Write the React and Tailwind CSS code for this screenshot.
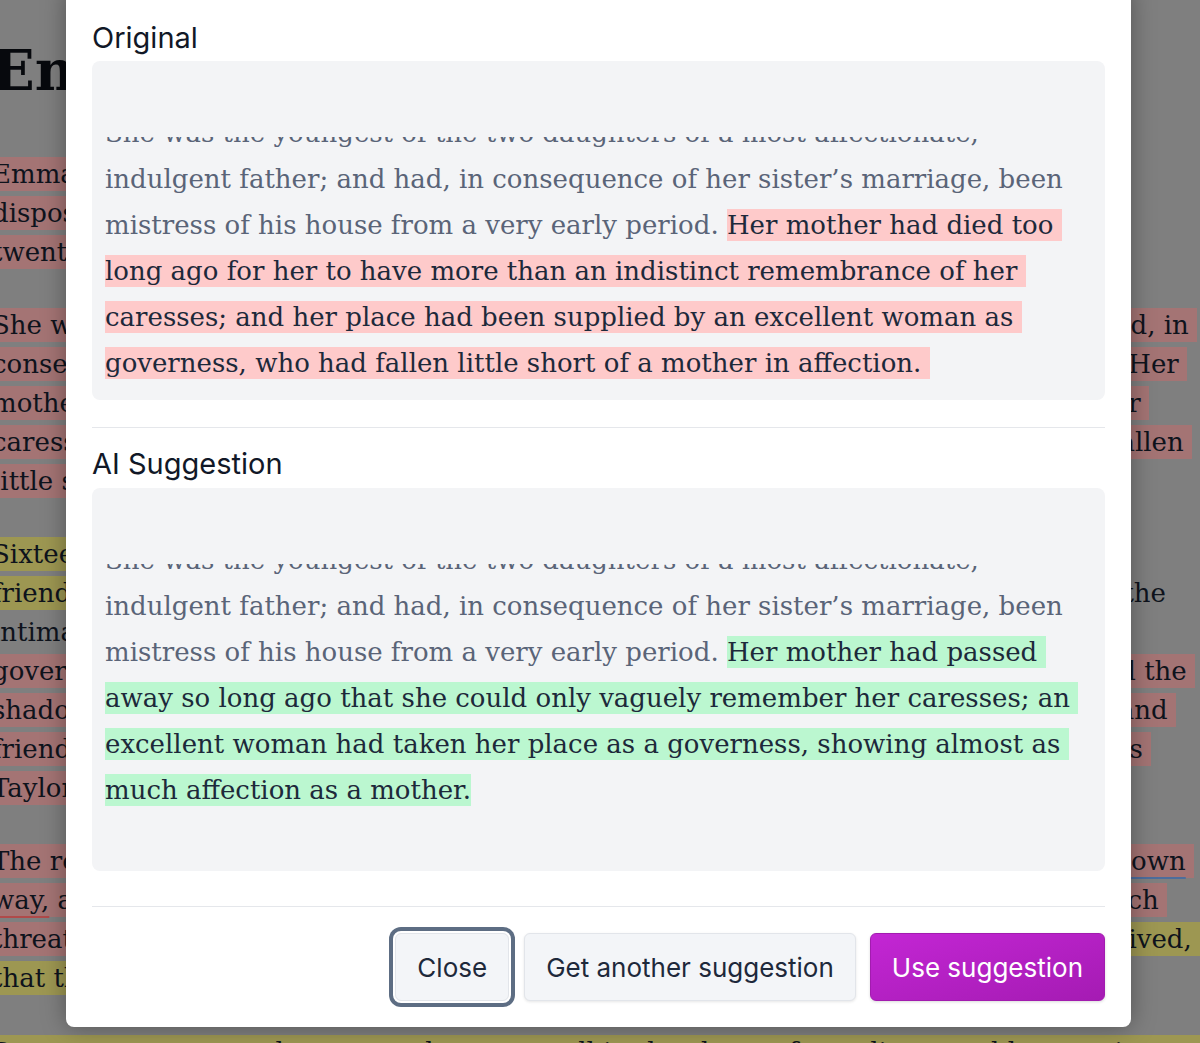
const serif = "font-['DejaVu_Serif',serif]";
const sans = "font-['Inter',sans-serif]";

const RED = 'bg-[#a47474]';
const YEL = 'bg-[#9d9752]';

// one line of the dimmed page behind the dialog: only its two ends show
function PageLine({ left, right, lbg = '', rbg = '', pr = 'pr-0' }) {
  return (
    <div className={`flex justify-between whitespace-pre ${pr}`}>
      <div>
        <span className={`${lbg} py-[2px]`}>{left}</span>
      </div>
      <div>
        <span className={`${rbg} py-[2px]`}>{right}</span>
      </div>
    </div>
  );
}

function Page() {
  return (
    <div className={`${serif} text-[#0e131c] ml-[-8px] pt-[30px]`}>
      <h1 className="text-[56px] leading-[80px] font-bold text-[#07090d]">Emma</h1>

      <div className="mt-[45px] text-[26px] leading-[39px]">
        <PageLine left="Emma Woodhouse, handsome, clever, and rich," lbg={RED} />
        <PageLine left="disposition, seemed to unite some of the best" lbg={RED} />
        <PageLine left="twenty-one years in the world with very little" lbg={RED} />
      </div>

      <div className="mt-[34px] text-[26px] leading-[39px]">
        <PageLine left="She was the youngest of the two" lbg={RED} right="father; and had, in " rbg={RED} pr="pr-[3px]" />
        <PageLine left="consequence of her sister’s marriage," lbg={RED} right="early period. Her " rbg={RED} pr="pr-[13px]" />
        <PageLine left="mother had died too long ago for her" lbg={RED} right="remembrance of her " rbg={RED} pr="pr-[51px]" />
        <PageLine left="caresses; and her place had been" lbg={RED} right="who had fallen " rbg={RED} pr="pr-[8px]" />
        <PageLine left="little short of a mother in affection." lbg={RED} />
      </div>

      <div className="mt-[34px] text-[26px] leading-[39px]">
        <PageLine left="Sixteen years had Miss Taylor been" lbg={YEL} />
        <PageLine left="friend, very fond of both daughters," lbg={YEL} right="it was more the" pr="pr-[34px]" />
        <PageLine left="intimacy of sisters. Even before" />
        <PageLine left="governess, the mildness of her temper" lbg={RED} right="restraint; and the " rbg={RED} pr="pr-[5px]" />
        <PageLine left="shadow of authority being now long" lbg={RED} right="friend and " rbg={RED} pr="pr-[24px]" />
        <PageLine left="friend very mutually attached, and" lbg={RED} right="esteeming Miss " rbg={RED} pr="pr-[49px]" />
        <PageLine left="Taylor’s judgment, but directed chiefly" lbg={RED} />
      </div>

      <div className="mt-[34px] text-[26px] leading-[39px]">
        <PageLine
          left="The real evils, indeed, of Emma’s"
          lbg={RED}
          right={<>too much her <span className="underline decoration-2 decoration-[#4d6d9c] underline-offset-[7px]">own</span> </>}
          rbg={RED}
          pr="pr-[6px]"
        />
        <PageLine
          left={<><span className="underline decoration-2 decoration-[#b04a4a] underline-offset-[7px]">way,</span> and a disposition to think</>}
          lbg={RED}
          right="disadvantages which "
          rbg={RED}
          pr="pr-[33px]"
        />
        <PageLine left="threatened alloy to her many enjoyments." lbg={RED} right="at present so unperceived, " rbg={YEL} />
        <PageLine left="that they did not by any means rank as" lbg={YEL} />
      </div>

      <div className="mt-[35px] text-[26px] leading-[39px] whitespace-pre">
        <span className={`${YEL} py-[2px]`}>Sorrow came—a gentle sorrow—but not at all in the shape of any disagreeable consciousness. </span>
      </div>
    </div>
  );
}

// text inside the dialog's boxes
function TextLine({ children }) {
  return <div className="whitespace-pre">{children}</div>;
}

function Mark({ tone, children }) {
  const bg = tone === 'red' ? 'bg-[#fecaca]' : 'bg-[#bbf7d0]';
  return <span className={`${bg} text-[#1d293a] py-[1px]`}>{children}</span>;
}

function Passage({ tone, box, clip, lines }) {
  return (
    <div className={`${box} rounded-lg bg-[#f3f4f6] pt-[76px] px-[13px]`}>
      <div className={`${clip} overflow-hidden`}>
        <div className={`mt-[-27px] ${serif} text-[26px] leading-[46px] text-[#5a6478]`}>
          <TextLine>She was the youngest of the two daughters of a most affectionate,</TextLine>
          <TextLine>indulgent father; and had, in consequence of her sister’s marriage, been</TextLine>
          <TextLine>
            mistress of his house from a very early period. <Mark tone={tone}>{lines[0]}</Mark>
          </TextLine>
          {lines.slice(1).map((l) => (
            <TextLine key={l}>
              <Mark tone={tone}>{l}</Mark>
            </TextLine>
          ))}
        </div>
      </div>
    </div>
  );
}

export default function App() {
  return (
    <div className="relative w-[1200px] h-[1043px] overflow-hidden bg-[#7f7f7f]">
      <Page />

      {/* dialog */}
      <div className={`${sans} absolute left-[66px] top-[-12px] w-[1065px] rounded-lg bg-white px-[26px] pt-[32px] pb-[26px] shadow-[0_0_24px_rgba(0,0,0,0.35)]`}>
        <h2 className="text-[29px] leading-[36px] text-[#111827] mb-[5px]">Original</h2>
        <Passage
          tone="red"
          box="h-[339px]"
          clip="h-[251px]"
          lines={[
            'Her mother had died too ',
            'long ago for her to have more than an indistinct remembrance of her ',
            'caresses; and her place had been supplied by an excellent woman as ',
            'governess, who had fallen little short of a mother in affection. ',
          ]}
        />

        <div className="mt-[27px] border-t border-[#e5e7eb]" />

        <h2 className="mt-[18px] text-[29px] leading-[36px] text-[#111827] mb-[6px]">AI Suggestion</h2>
        <Passage
          tone="green"
          box="h-[383px]"
          clip="h-[300px]"
          lines={[
            'Her mother had passed ',
            'away so long ago that she could only vaguely remember her caresses; an ',
            'excellent woman had taken her place as a governess, showing almost as ',
            'much affection as a mother.',
          ]}
        />

        <div className="mt-[35px] border-t border-[#e5e7eb]" />

        <div className="mt-[26px] flex justify-end items-center gap-[14px] text-[26px]">
          <button className="h-[68px] px-[21px] mr-px rounded-[6px] border border-[#e2e5ea] bg-[#f3f5f8] text-[#1e293b] ring-[4px] ring-[#5d6d83] ring-offset-[2px] ring-offset-white">
            Close
          </button>
          <button className="h-[68px] px-[21px] rounded-[6px] border border-[#e2e5ea] bg-[#f3f5f8] text-[#1e293b] shadow-[0_1px_3px_rgba(0,0,0,0.1)]">
            Get another suggestion
          </button>
          <button className="h-[68px] px-[21px] rounded-[6px] border border-[#a21caf] bg-linear-to-br from-[#c326d4] to-[#a51bb3] text-white shadow-[0_1px_3px_rgba(0,0,0,0.15)]">
            Use suggestion
          </button>
        </div>
      </div>
    </div>
  );
}
